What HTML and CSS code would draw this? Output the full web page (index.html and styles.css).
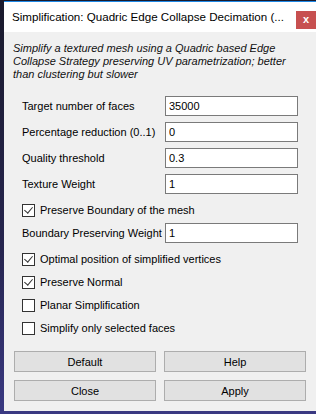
FILE: index.html
```html
<!DOCTYPE html>
<html lang="en">
<head>
    <meta charset="UTF-8">
    <meta name="viewport" content="width=device-width, initial-scale=1.0">
    <title>Simplification: Quadric Edge Collapse Decimation</title>
    <link rel="stylesheet" href="styles.css">
</head>
<body>
    <div class="window">
        <div class="titlebar">
            <span class="title">Simplification: Quadric Edge Collapse Decimation (...</span>
            <span class="close">x</span>
        </div>

        <p class="description">
            Simplify a textured mesh using a Quadric based Edge<br>
            Collapse Strategy preserving UV parametrization; better<br>
            than clustering but slower
        </p>

        <div class="form">
            <div class="field-row">
                <label>Target number of faces</label>
                <input type="text" value="35000">
            </div>
            <div class="field-row">
                <label>Percentage reduction (0..1)</label>
                <input type="text" value="0">
            </div>
            <div class="field-row">
                <label>Quality threshold</label>
                <input type="text" value="0.3">
            </div>
            <div class="field-row">
                <label>Texture Weight</label>
                <input type="text" value="1">
            </div>
            <div class="check-row">
                <span class="box checked"></span>
                <span>Preserve Boundary of the mesh</span>
            </div>
            <div class="field-row">
                <label>Boundary Preserving Weight</label>
                <input type="text" value="1">
            </div>
            <div class="check-row">
                <span class="box checked"></span>
                <span>Optimal position of simplified vertices</span>
            </div>
            <div class="check-row">
                <span class="box checked"></span>
                <span>Preserve Normal</span>
            </div>
            <div class="check-row">
                <span class="box"></span>
                <span>Planar Simplification</span>
            </div>
            <div class="check-row">
                <span class="box"></span>
                <span>Simplify only selected faces</span>
            </div>
        </div>

        <div class="buttons">
            <button class="btn">Default</button>
            <button class="btn">Help</button>
            <button class="btn">Close</button>
            <button class="btn">Apply</button>
        </div>
    </div>
</body>
</html>
```

FILE: styles.css
```css
:root {
    --face: #f0f0f0;
    --border-input: #7a7a7a;
    --btn-face: #e1e1e1;
    --btn-border: #adadad;
    --accent: #1e88e5;
    --close-red: #c75050;
}

* {
    margin: 0;
    padding: 0;
    box-sizing: border-box;
    font-family: 'Liberation Sans', Arial, sans-serif;
}

body {
    width: 316px;
    height: 414px;
    overflow: hidden;
    background: linear-gradient(180deg, #1a1a2c 0%, #26254f 60%, #3a3982 100%);
    color: #000;
    font-size: 11px;
}

.window {
    margin: 1px 0 0 4px;
    height: 410px;
    background-color: var(--face);
    border-top: 1px solid var(--accent);
}

.titlebar {
    height: 30px;
    background-color: #fff;
    display: flex;
    padding-left: 8px;
}

.title {
    flex: 1;
    font-size: 11.6px;
    line-height: 30px;
    white-space: nowrap;
    overflow: hidden;
}

.close {
    width: 20px;
    height: 18px;
    margin-top: 9px;
    background-color: var(--close-red);
    color: #fff;
    font-weight: bold;
    font-size: 11px;
    line-height: 17px;
    text-align: center;
}

.description {
    padding: 10px 9px 0 9px;
    font-style: italic;
    font-size: 11px;
    line-height: 13px;
    color: #111;
}

/* Campos do formulário */
.form {
    margin-top: 15px;
    padding: 0 18px;
    display: flex;
    flex-direction: column;
    gap: 6px;
}

.field-row {
    display: grid;
    grid-template-columns: 143px 133px;
    height: 20px;
    align-items: center;
}

.field-row label {
    white-space: nowrap;
}

.field-row input {
    height: 20px;
    border: 1px solid var(--border-input);
    background: #fff;
    padding-left: 3px;
    font-size: 11px;
    color: #000;
    outline: none;
}

.check-row {
    height: 17px;
    padding-top: 4px;
    display: flex;
    align-items: center;
    gap: 5px;
    line-height: 13px;
    white-space: nowrap;
}

.box {
    width: 13px;
    height: 13px;
    border: 1px solid #333;
    background: #fff;
    position: relative;
    flex-shrink: 0;
}

.box.checked::after {
    content: '';
    position: absolute;
    left: 3px;
    top: 0px;
    width: 4px;
    height: 7px;
    border-right: 1.5px solid #333;
    border-bottom: 1.5px solid #333;
    transform: rotate(40deg);
}

/* Botões */
.buttons {
    margin-top: 16px;
    padding: 0 6px 0 10px;
    display: grid;
    grid-template-columns: 142px 142px;
    column-gap: 8px;
    row-gap: 8px;
}

.btn {
    height: 21px;
    background-color: var(--btn-face);
    border: 1px solid var(--btn-border);
    font-size: 11px;
    color: #000;
}
```
